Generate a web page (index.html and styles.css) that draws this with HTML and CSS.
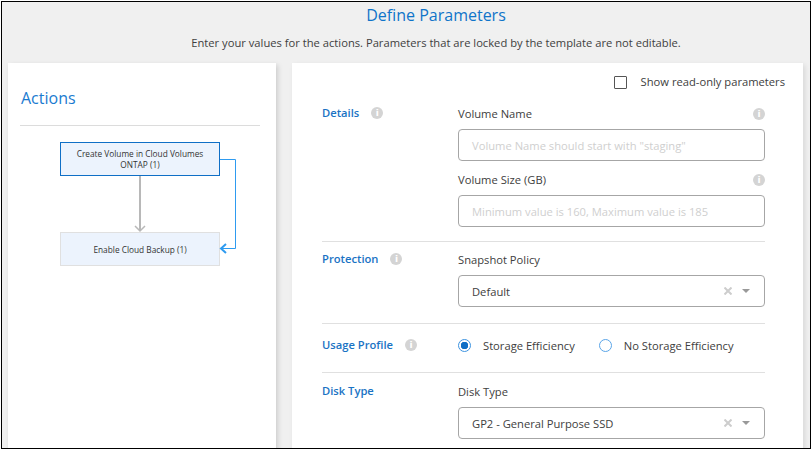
FILE: index.html
```html
<!DOCTYPE html>
<html lang="en">
<head>
<meta charset="UTF-8">
<meta name="viewport" content="width=device-width, initial-scale=1.0">
<title>Define Parameters</title>
<link rel="stylesheet" href="styles.css">
</head>
<body>
<div class="frame">
  <header class="page-head">
    <h1>Define Parameters</h1>
    <p>Enter your values for the actions. Parameters that are locked by the template are not editable.</p>
  </header>
  <div class="columns">
    <aside class="actions-card">
      <h2>Actions</h2>
      <div class="flow">
        <div class="node node-active">Create Volume in Cloud Volumes ONTAP (1)</div>
        <div class="node node-next">Enable Cloud Backup (1)</div>
        <svg class="flow-lines" width="200" height="130" viewBox="0 0 200 130">
          <path d="M80 34V88" fill="none" stroke="#b8b8b8" stroke-width="2"/>
          <path d="M75 84l5 5 5-5" fill="none" stroke="#b8b8b8" stroke-width="1.500"/>
          <path d="M160 17.500H175.500V106.500H161" fill="none" stroke="#2e9bf0" stroke-width="1"/>
          <path d="M166 102l-5 4.500 5 4.500" fill="none" stroke="#2e9bf0" stroke-width="2"/>
        </svg>
      </div>
    </aside>
    <main class="form-card">
      <label class="readonly-toggle"><span class="checkbox"></span>Show read-only parameters</label>

      <section class="form-section details">
        <div class="section-title"><h3>Details</h3><span class="info">i</span></div>
        <div class="fields">
          <div class="field-label">Volume Name <span class="info">i</span></div>
          <div class="input placeholder">Volume Name should start with "staging"</div>
          <div class="field-label second">Volume Size (GB) <span class="info">i</span></div>
          <div class="input placeholder">Minimum value is 160, Maximum value is 185</div>
        </div>
      </section>

      <section class="form-section protection">
        <div class="section-title"><h3>Protection</h3><span class="info">i</span></div>
        <div class="fields">
          <div class="field-label">Snapshot Policy</div>
          <div class="input select">Default
            <span class="select-icons">
              <svg class="clear" width="8" height="8" viewBox="0 0 8 8"><path d="M0.500 0.500L7.500 7.500M7.500 0.500L0.500 7.500" fill="none" stroke="#cdcdcd" stroke-width="2"/></svg>
              <span class="caret"></span>
            </span>
          </div>
        </div>
      </section>

      <section class="form-section usage">
        <div class="section-title"><h3>Usage Profile</h3><span class="info">i</span></div>
        <div class="radios">
          <label class="radio-item"><span class="radio checked"></span>Storage Efficiency</label>
          <label class="radio-item"><span class="radio"></span>No Storage Efficiency</label>
        </div>
      </section>

      <section class="form-section disk">
        <div class="section-title"><h3>Disk Type</h3></div>
        <div class="fields">
          <div class="field-label">Disk Type</div>
          <div class="input select">GP2 - General Purpose SSD
            <span class="select-icons">
              <svg class="clear" width="8" height="8" viewBox="0 0 8 8"><path d="M0.500 0.500L7.500 7.500M7.500 0.500L0.500 7.500" fill="none" stroke="#cdcdcd" stroke-width="2"/></svg>
              <span class="caret"></span>
            </span>
          </div>
        </div>
      </section>
    </main>
  </div>
</div>
</body>
</html>
```

FILE: styles.css
```css
html, body {
  margin: 0;
  height: 100%;
  overflow: hidden;
  background: white;
}
.frame {
  box-sizing: border-box;
  width: 810px;
  height: 448px;
  margin: 1px 0 0 1px;
  border: 1px solid #000;
  background: #f0f0f0;
  overflow: hidden;
  font-family: "Open Sans", sans-serif;
  color: #404040;
}
.page-head {
  height: 61px;
  padding-left: 60px;
  text-align: center;
}
.page-head h1 {
  margin: 0;
  padding-top: 2px;
  font-size: 16px;
  line-height: 22px;
  font-weight: 400;
  color: #0f74c9;
}
.page-head p {
  margin: 0;
  padding-top: 9px;
  font-size: 11.200px;
  line-height: 16px;
}
.columns {
  display: flex;
  gap: 16px;
  padding-left: 6px;
}
.actions-card {
  box-sizing: border-box;
  width: 268px;
  height: 400px;
  padding: 24px 16px 0 12px;
  background: white;
  box-shadow: 2px 2px 5px rgba(0, 0, 0, 0.15);
}
.actions-card h2 {
  margin: 0;
  padding: 0 0 16px 1px;
  font-size: 16px;
  line-height: 22px;
  font-weight: 400;
  color: #1a7bd0;
  border-bottom: 1px solid #dcdcdc;
}
.flow {
  position: relative;
  width: 160px;
  margin: 16px 0 0 40px;
  font-size: 8.300px;
  line-height: 11px;
  text-align: center;
  color: #333;
}
.node {
  box-sizing: border-box;
  width: 160px;
  display: flex;
  align-items: center;
  justify-content: center;
  padding: 0 10px;
  background: #ecf3fd;
}
.node-active {
  height: 34px;
  border: 1px solid #0f6fc6;
}
.node-next {
  height: 34px;
  margin-top: 56px;
  border: 1px solid #e0e0e0;
}
.flow-lines {
  position: absolute;
  left: 0;
  top: 0;
}
.form-card {
  box-sizing: border-box;
  width: 511px;
  height: 400px;
  padding: 11px 38px 0 30px;
  background: white;
  box-shadow: 2px 2px 5px rgba(0, 0, 0, 0.1);
  font-size: 11.200px;
}
.readonly-toggle {
  display: flex;
  justify-content: flex-end;
  align-items: center;
  margin-right: -20px;
  height: 16px;
  line-height: 16px;
}
.checkbox {
  box-sizing: border-box;
  width: 13px;
  height: 13px;
  margin-right: 14px;
  border: 1px solid #555;
  border-radius: 1px;
}
.form-section {
  display: flex;
  border-bottom: 1px solid #e0e0e0;
}
.form-section.details { padding: 15px 0 14px; }
.form-section.protection { padding: 9px 0 16px; }
.form-section.usage { padding: 13px 0 19px; }
.form-section.disk { border-bottom: 0; padding: 10px 0 0; }
.section-title {
  display: flex;
  width: 136px;
  height: 16px;
  align-items: center;
  gap: 12px;
}
.section-title h3 {
  margin: 0;
  font-size: 11.200px;
  line-height: 16px;
  font-weight: 600;
  color: #1a73c4;
}
.fields {
  width: 307px;
  margin-top: 1px;
}
.field-label {
  display: flex;
  justify-content: space-between;
  align-items: center;
  height: 16px;
  line-height: 16px;
  margin-bottom: 7px;
}
.field-label.second {
  margin-top: 11px;
}
.info {
  display: inline-block;
  width: 12px;
  height: 12px;
  border-radius: 50%;
  background: #d4d4d4;
  color: white;
  font-family: "DejaVu Sans", sans-serif;
  font-size: 9px;
  font-weight: 700;
  line-height: 12px;
  text-align: center;
}
.input {
  box-sizing: border-box;
  position: relative;
  height: 32px;
  padding: 0 13px;
  border: 1px solid #a6a6a6;
  border-radius: 4px;
  line-height: 32px;
}
.placeholder {
  color: #cfcfcf;
}
.select-icons {
  position: absolute;
  right: 14px;
  top: 0;
  display: flex;
  align-items: center;
  gap: 10px;
  height: 30px;
}
.caret {
  width: 0;
  height: 0;
  border-left: 4px solid transparent;
  border-right: 4px solid transparent;
  border-top: 4px solid #999;
}
.radios {
  display: flex;
  gap: 24px;
}
.radio-item {
  display: flex;
  align-items: center;
  height: 16px;
  gap: 12px;
}
.radio {
  box-sizing: border-box;
  width: 13px;
  height: 13px;
  border: 1px solid #5aa5e8;
  border-radius: 50%;
  background: white;
}
.radio.checked {
  border-color: #3d93e0;
  background: radial-gradient(circle, #0f6fc6 0, #0f6fc6 3.5px, white 4px);
}
```
